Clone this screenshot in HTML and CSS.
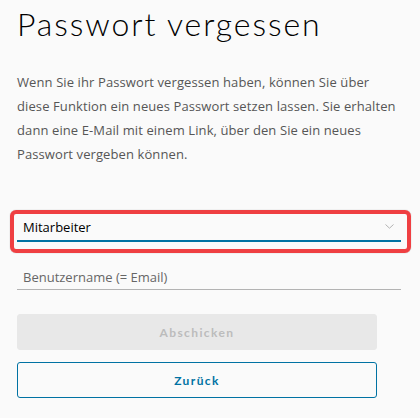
FILE: index.html
```html
<!DOCTYPE html>
<html lang="de">
<head>
<meta charset="utf-8">
<title>Passwort vergessen</title>
<link rel="stylesheet" href="styles.css">
</head>
<body>
<main class="page">
  <h1 class="title">Passwort vergessen</h1>
  <p class="intro">Wenn Sie ihr Passwort vergessen haben, können Sie über<br>diese Funktion ein neues Passwort setzen lassen. Sie erhalten<br>dann eine E-Mail mit einem Link, über den Sie ein neues<br>Passwort vergeben können.</p>
  <form class="form">
    <div class="highlight">
      <div class="select">
        <span class="select-value">Mitarbeiter</span>
        <svg class="chevron" width="9" height="5" viewBox="0 0 9 5" aria-hidden="true"><path d="M0.5 0.5 L4.5 4.2 L8.5 0.5" fill="none" stroke="#b3b3b3" stroke-width="1"/></svg>
      </div>
    </div>
    <div class="input">
      <span class="placeholder">Benutzername (= Email)</span>
    </div>
    <div class="actions">
      <button type="button" class="btn btn-disabled">Abschicken</button>
      <button type="button" class="btn btn-outline">Zurück</button>
    </div>
  </form>
</main>
</body>
</html>
```
FILE: styles.css
```css
html, body {
  margin: 0;
  padding: 0;
  background: #fafafa;
}
.page {
  padding: 0 19px 0 17px;
}
.title {
  margin: 0;
  padding-top: 2px;
  font-family: "Lato", "Open Sans", sans-serif;
  font-weight: 300;
  font-size: 32px;
  line-height: 44px;
  color: #000;
  letter-spacing: 1.9px;
}
.intro {
  margin: 24px -19px 0 0;
  white-space: nowrap;
  font-family: "Open Sans", "Noto Sans", sans-serif;
  font-size: 13px;
  line-height: 24px;
  letter-spacing: 0.1px;
  color: #565656;
}
.form {
  margin-top: 44px;
}
.highlight {
  margin-left: -7px;
  margin-right: -10px;
  border: 4px solid #ef3f42;
  border-radius: 6px;
  padding: 0 6px 7px 3px;
  box-shadow: 0 0 1px rgba(0,0,0,0.4);
}
.select {
  display: flex;
  align-items: center;
  justify-content: space-between;
  height: 26px;
  padding: 0 7px 0 6px;
  border-bottom: 2px solid #0072a3;
  font-family: "Open Sans", "Noto Sans", sans-serif;
  font-size: 13px;
  color: #000;
}
.chevron {
  display: block;
  margin-bottom: 2px;
}
.input {
  margin-top: 12px;
  height: 24px;
  padding: 0 6px;
  border-bottom: 1px solid #b3b3b3;
  display: flex;
  align-items: center;
  font-family: "Open Sans", "Noto Sans", sans-serif;
  font-size: 13px;
  color: #666;
}
.actions {
  margin-top: 24px;
  display: flex;
  flex-direction: column;
  gap: 12px;
  width: 360px;
}
.btn {
  height: 36px;
  margin: 0;
  border-radius: 3px;
  font-family: "Lato", sans-serif;
  font-weight: 700;
  font-size: 12px;
  letter-spacing: 1.4px;
  cursor: pointer;
}
.btn-disabled {
  background: #e8e8e8;
  border: 1px solid #e8e8e8;
  color: #bcbcbc;
}
.btn-outline {
  background: transparent;
  border: 1px solid #0072a3;
  color: #0072a3;
}
```
